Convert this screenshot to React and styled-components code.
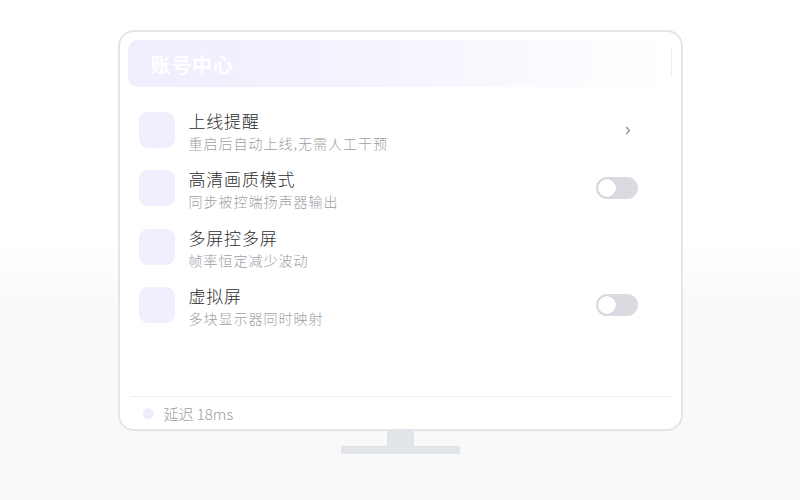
import React from "react";
import styled, { createGlobalStyle } from "styled-components";

const GlobalStyle = createGlobalStyle`
  html, body {
    margin: 0;
    padding: 0;
  }
  body {
    font-family: "Noto Sans CJK SC", "Noto Sans", sans-serif;
    background: #ffffff;
  }
`;

const Page = styled.div`
  width: 800px;
  height: 500px;
  background: linear-gradient(180deg, #ffffff 0%, #ffffff 48%, #f9f9fa 62%, #f9f9fa 100%);
  display: flex;
  flex-direction: column;
  align-items: center;
  padding-top: 30px;
  box-sizing: border-box;
`;

const Monitor = styled.div`
  width: 565px;
  height: 401px;
  box-sizing: border-box;
  border: 2px solid #e3e5ea;
  border-radius: 16px;
  background: #ffffff;
  padding: 8px 9px 0 8px;
  display: flex;
  flex-direction: column;
`;

const Header = styled.div`
  position: relative;
  height: 47px;
  border-radius: 10px;
  background: linear-gradient(90deg, #f0edfd 0%, #f5f3fe 45%, #ffffff 100%);
  display: flex;
  align-items: center;
  padding-left: 23px;
`;

const HeaderTitle = styled.div`
  color: #ffffff;
  font-size: 20px;
  font-weight: 700;
  letter-spacing: 0.8px;
  margin-top: 1px;
`;

const Ghost = styled.div`
  position: absolute;
  right: 19px;
  top: 16px;
  color: #ffffff;
  font-size: 12.5px;
  font-weight: 700;
  &::after {
    content: "";
    position: absolute;
    right: -19px;
    top: -8px;
    width: 1px;
    height: 29px;
    background: #eceef2;
  }
`;

const List = styled.div`
  flex: 1;
  display: flex;
  flex-direction: column;
  padding: 25px 34px 0 11px;
`;

const Row = styled.div`
  display: flex;
  align-items: center;
  height: 36px;
  margin-bottom: 22.3px;
`;

const IconBox = styled.div`
  width: 36px;
  height: 36px;
  border-radius: 9px;
  background: #f1eefd;
  flex-shrink: 0;
`;

const Texts = styled.div`
  flex: 1;
  margin-left: 14px;
  display: flex;
  flex-direction: column;
  margin-top: 3px;
`;

const Title = styled.div`
  font-size: 17px;
  line-height: 20px;
  color: #2d2d30;
  font-weight: 300;
  letter-spacing: 0.8px;
`;

const Sub = styled.div`
  font-size: 14px;
  line-height: 18px;
  color: #9e9ea6;
  font-weight: 300;
  letter-spacing: 1px;
  margin-top: 3px;
`;

const Chevron = styled.svg`
  margin-right: 7px;
`;

const Toggle = styled.div`
  width: 42px;
  height: 22px;
  border-radius: 11px;
  background: #d9dbe1;
  position: relative;
  &::after {
    content: "";
    position: absolute;
    left: 2px;
    top: 2px;
    width: 18px;
    height: 18px;
    border-radius: 50%;
    background: #ffffff;
    box-shadow: 0 0 0 0.5px #c8cad0;
  }
`;

const Footer = styled.div`
  height: 32px;
  border-top: 1px solid #eceef2;
  margin: 0 0 0 2px;
  display: flex;
  align-items: center;
  padding-left: 13px;
  gap: 10px;
`;

const Dot = styled.div`
  width: 11px;
  height: 11px;
  border-radius: 50%;
  background: #efecfc;
`;

const FooterText = styled.div`
  font-size: 15px;
  font-weight: 300;
  color: #9a9aa2;
`;

const Neck = styled.div`
  width: 27px;
  height: 15px;
  background: #e1e4e8;
`;

const Base = styled.div`
  width: 119px;
  height: 8px;
  background: #e1e4e8;
`;

const items = [
  { title: "上线提醒", sub: "重启后自动上线,无需人工干预", action: "chevron" },
  { title: "高清画质模式", sub: "同步被控端扬声器输出", action: "toggle" },
  { title: "多屏控多屏", sub: "帧率恒定减少波动", action: null },
  { title: "虚拟屏", sub: "多块显示器同时映射", action: "toggle" },
];

export default function App() {
  return (
    <>
      <GlobalStyle />
      <Page>
        <Monitor>
          <Header>
            <HeaderTitle>账号中心</HeaderTitle>
            <Ghost>账号中心</Ghost>
          </Header>
          <List>
            {items.map((it) => (
              <Row key={it.title}>
                <IconBox />
                <Texts>
                  <Title>{it.title}</Title>
                  <Sub>{it.sub}</Sub>
                </Texts>
                {it.action === "chevron" && (
                  <Chevron width="6" height="9" viewBox="0 0 6 9">
                    <path d="M1.2 1l3.3 3.5L1.2 8" fill="none" stroke="#8e8e96" strokeWidth="1.2" />
                  </Chevron>
                )}
                {it.action === "toggle" && <Toggle />}
              </Row>
            ))}
          </List>
          <Footer>
            <Dot />
            <FooterText>延迟 18ms</FooterText>
          </Footer>
        </Monitor>
        <Neck />
        <Base />
      </Page>
    </>
  );
}
